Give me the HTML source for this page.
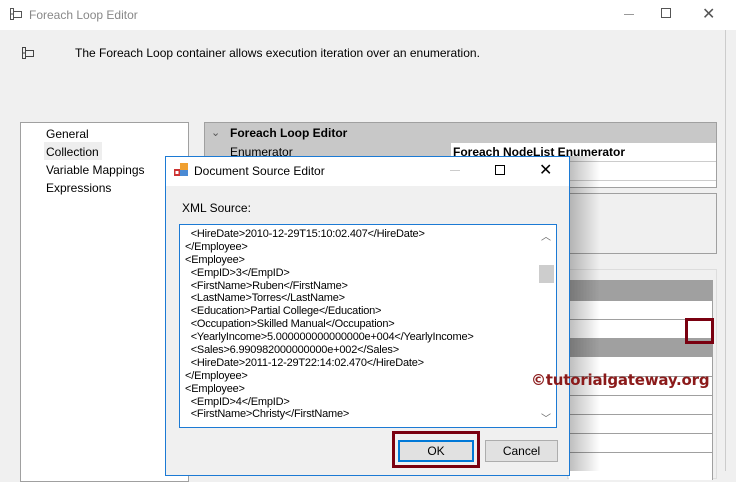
<!DOCTYPE html><html><head><style>
*{margin:0;padding:0;box-sizing:border-box}
body{width:736px;height:471px;background:#f0f0f0;font-family:"Liberation Sans",sans-serif;font-size:12px;color:#000;position:relative;overflow:hidden}
.a{position:absolute}
.xml div{height:12.9px;line-height:12.9px;font-size:11px;white-space:pre;letter-spacing:-0.2px}
</style></head><body>
<div class="a" style="left:0;top:0;width:736px;height:30px;background:#fff"></div>
<svg class="a" style="left:9px;top:7px" width="14" height="14"><path d="M1.5 1.5h3v11h-3zM4.5 4.5h8v6h-8M1.5 7h3" fill="none" stroke="#555"/></svg>
<div class="a" style="left:29px;top:8px;font-size:12px;color:#888">Foreach Loop Editor</div>
<div class="a" style="left:624px;top:14px;width:10px;height:1px;background:#999"></div>
<div class="a" style="left:661px;top:8px;width:10px;height:10px;border:1px solid #555"></div>
<div class="a" style="left:702px;top:4px;font-size:16px;color:#555">✕</div>
<svg class="a" style="left:21px;top:46px" width="14" height="14"><path d="M1.5 1.5h3v11h-3zM4.5 4.5h8v6h-8M1.5 7h3" fill="none" stroke="#444"/></svg>
<div class="a" style="left:75px;top:46px">The Foreach Loop container allows execution iteration over an enumeration.</div>
<div class="a" style="left:725px;top:30px;width:1px;height:441px;background:#ccc"></div>
<div class="a" style="left:20px;top:122px;width:169px;height:360px;background:#fff;border:1px solid #a0a0a0"></div>
<div class="a" style="left:44px;top:142px;width:58px;height:18px;background:#eee"></div>
<div class="a" style="left:46px;top:125px;line-height:18px">General<br>Collection<br>Variable Mappings<br>Expressions</div>
<div class="a" style="left:204px;top:122px;width:513px;height:66px;background:#c8c8c8;border:1px solid #a0a0a0"></div>
<div class="a" style="left:211px;top:126px;font-size:11px;color:#555">⌄</div>
<div class="a" style="left:230px;top:126px;font-weight:bold">Foreach Loop Editor</div>
<div class="a" style="left:230px;top:145px">Enumerator</div>
<div class="a" style="left:451px;top:143px;width:265px;height:44px;background:#fff"></div>
<div class="a" style="left:451px;top:161px;width:265px;height:1px;background:#ccc"></div>
<div class="a" style="left:451px;top:180px;width:265px;height:1px;background:#ccc"></div>
<div class="a" style="left:453px;top:145px;font-weight:bold">Foreach NodeList Enumerator</div>
<div class="a" style="left:204px;top:193px;width:513px;height:61px;border:1px solid #a0a0a0"></div>
<div class="a" style="left:567px;top:269px;width:150px;height:210px;border:1px solid #ddd"></div>
<div class="a" style="left:569px;top:280px;width:144px;height:200px;background:#fff;border-right:1px solid #a0a0a0"></div>
<div class="a" style="left:569px;top:280px;width:144px;height:21px;background:#a0a0a0"></div>
<div class="a" style="left:569px;top:338px;width:144px;height:19px;background:#a0a0a0"></div>
<div class="a" style="left:569px;top:319px;width:144px;height:1px;background:#a0a0a0"></div>
<div class="a" style="left:569px;top:376px;width:144px;height:1px;background:#a0a0a0"></div>
<div class="a" style="left:569px;top:395px;width:144px;height:1px;background:#a0a0a0"></div>
<div class="a" style="left:569px;top:414px;width:144px;height:1px;background:#a0a0a0"></div>
<div class="a" style="left:569px;top:433px;width:144px;height:1px;background:#a0a0a0"></div>
<div class="a" style="left:569px;top:452px;width:144px;height:1px;background:#a0a0a0"></div>
<div class="a" style="left:685px;top:318px;width:29px;height:26px;border:3px solid #7a0010"></div>
<div class="a" style="left:570px;top:156px;width:30px;height:315px;background:linear-gradient(to right,rgba(0,0,0,.25),rgba(0,0,0,0))"></div>
<div class="a" style="left:165px;top:156px;width:405px;height:320px;background:#f0f0f0;border:1px solid #1c7ad4"></div>
<div class="a" style="left:166px;top:157px;width:403px;height:29px;background:#fff"></div>
<svg class="a" style="left:174px;top:163px" width="14" height="14"><rect x="0" y="6" width="6" height="7" fill="#c33"/><rect x="6" y="0" width="8" height="7" fill="#f0a030"/><rect x="6" y="7" width="8" height="6" fill="#4a8ad4"/><rect x="1.5" y="8" width="3" height="3" fill="#fff"/></svg>
<div class="a" style="left:194px;top:164px">Document Source Editor</div>
<div class="a" style="left:450px;top:170px;width:10px;height:1px;background:#ccc"></div>
<div class="a" style="left:495px;top:165px;width:10px;height:10px;border:1px solid #000"></div>
<div class="a" style="left:539px;top:160px;font-size:16px">✕</div>
<div class="a" style="left:182px;top:201px">XML Source:</div>
<div class="a" style="left:179px;top:224px;width:378px;height:204px;background:#fff;border:1px solid #1c7ad4"></div>
<div class="a" style="left:538px;top:226px;width:17px;height:200px;background:#fff"></div>
<div class="a" style="left:539px;top:265px;width:15px;height:18px;background:#cdcdcd"></div>
<div class="a" style="left:541px;top:228px;font-size:10px;color:#666">︿</div>
<div class="a" style="left:541px;top:410px;font-size:10px;color:#666">﹀</div>
<div class="a xml" style="left:185px;top:228px">
<div>  &lt;HireDate&gt;2010-12-29T15:10:02.407&lt;/HireDate&gt;</div>
<div>&lt;/Employee&gt;</div>
<div>&lt;Employee&gt;</div>
<div>  &lt;EmpID&gt;3&lt;/EmpID&gt;</div>
<div>  &lt;FirstName&gt;Ruben&lt;/FirstName&gt;</div>
<div>  &lt;LastName&gt;Torres&lt;/LastName&gt;</div>
<div>  &lt;Education&gt;Partial College&lt;/Education&gt;</div>
<div>  &lt;Occupation&gt;Skilled Manual&lt;/Occupation&gt;</div>
<div>  &lt;YearlyIncome&gt;5.000000000000000e+004&lt;/YearlyIncome&gt;</div>
<div>  &lt;Sales&gt;6.990982000000000e+002&lt;/Sales&gt;</div>
<div>  &lt;HireDate&gt;2011-12-29T22:14:02.470&lt;/HireDate&gt;</div>
<div>&lt;/Employee&gt;</div>
<div>&lt;Employee&gt;</div>
<div>  &lt;EmpID&gt;4&lt;/EmpID&gt;</div>
<div>  &lt;FirstName&gt;Christy&lt;/FirstName&gt;</div>
</div>
<div class="a" style="left:392px;top:431px;width:88px;height:37px;border:3px solid #7a0010"></div>
<div class="a" style="left:398px;top:440px;width:76px;height:22px;background:#e1e1e1;border:2px solid #0078d7;text-align:center;line-height:18px">OK</div>
<div class="a" style="left:485px;top:440px;width:73px;height:22px;background:#e1e1e1;border:1px solid #adadad;text-align:center;line-height:20px">Cancel</div>
<div class="a" style="left:531px;top:371px;font-weight:bold;font-size:15px;color:#8b1a1a;font-family:'DejaVu Sans',sans-serif;letter-spacing:-0.2px">©tutorialgateway.org</div>
</body></html>
